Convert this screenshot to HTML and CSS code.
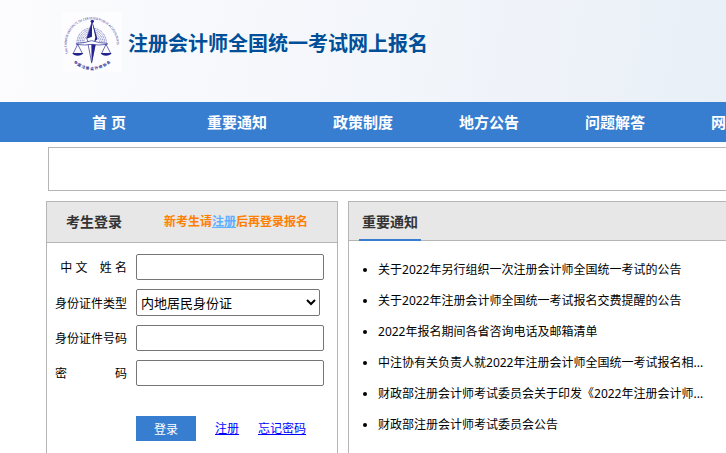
FILE: index.html
```html
<!DOCTYPE html>
<html lang="zh-CN">
<head>
  <meta charset="UTF-8">
  <meta name="viewport" content="width=device-width, initial-scale=1.0">
  <title>注册会计师全国统一考试网上报名</title>
  <link rel="stylesheet" href="styles.css">
</head>
<body>
  <!-- Header -->
  <header class="header">
    <svg class="logo" viewBox="0 0 180 180" aria-hidden="true">
      <defs>
        <path id="ringTop" d="M19 124 A75 75 0 1 1 159 124"/>
        <path id="ringBottom" d="M26 142 A82 82 0 0 0 154 142"/>
      </defs>
      <rect width="180" height="180" fill="#fdfdff"/>
      <!-- Rays -->
      <path d="M45 92 A44 44 0 0 1 133 92 M50 92 A39 39 0 0 1 128 92 M55 92 A34 34 0 0 1 123 92 M60 92 A29 29 0 0 1 118 92 M65 92 A24 24 0 0 1 113 92" fill="none" stroke="#7474bb" stroke-width="3" stroke-dasharray="3 2"/>
      <!-- Compass needle -->
      <path d="M90 30 L105 80 L96 92 H80 L74 80 Z" fill="#fff" stroke="#23238e" stroke-width="2"/>
      <path d="M90 30 L74 80 L90 74 Z" fill="#23238e"/>
      <path d="M91 30 L106 82 L97 88 L100 76 Z" fill="#23238e"/>
      <circle cx="91" cy="28" r="5" fill="#23238e"/>
      <path d="M78 96 H100 L89 152 Z" fill="#fff" stroke="#23238e" stroke-width="2"/>
      <path d="M88 96 H101 L89 156 Z" fill="#23238e"/>
      <!-- Scales -->
      <path d="M43 94 Q66 94 89 86 Q112 94 136 94 L136 97 Q110 101 89 97 Q68 101 43 97 Z" fill="#fff" stroke="#23238e" stroke-width="2"/>
      <path d="M47 97 L34 124 M47 97 L61 124 M132 97 L119 124 M132 97 L146 124" fill="none" stroke="#23238e" stroke-width="2"/>
      <path d="M31 123 H64 Q59 131 47 131 Q35 131 31 123 Z M116 123 H149 Q144 131 132 131 Q120 131 116 123 Z" fill="#23238e"/>
      <text class="logo-text"><textPath href="#ringTop">THE CHINESE INSTITUTE OF CERTIFIED PUBLIC ACCOUNTANTS</textPath></text>
      <text class="logo-text logo-text-cn"><textPath href="#ringBottom" startOffset="50%">中 国 注 册 会 计 师 协 会</textPath></text>
    </svg>
    <h1>注册会计师全国统一考试网上报名</h1>
  </header>

  <!-- Navigation -->
  <nav class="nav">
    <a href="#">首 页&nbsp;</a>
    <a href="#">重要通知</a>
    <a href="#">政策制度</a>
    <a href="#">地方公告</a>
    <a href="#">问题解答</a>
    <a href="#">网上咨询</a>
  </nav>

  <div class="banner"></div>

  <main class="main">
    <!-- Login -->
    <section class="panel login">
      <div class="panel-head">
        <h2>考生登录</h2>
        <p class="tip">新考生请<a href="#">注册</a>后再登录报名</p>
      </div>
      <form class="login-form">
        <div class="form-row">
          <label for="name">中 文 &nbsp;&nbsp; 姓 名</label>
          <input type="text" id="name" name="name">
        </div>
        <div class="form-row">
          <label for="cardType">身份证件类型</label>
          <select id="cardType" name="cardType">
            <option>内地居民身份证</option>
          </select>
        </div>
        <div class="form-row">
          <label for="cardNo">身份证件号码</label>
          <input type="text" id="cardNo" name="cardNo">
        </div>
        <div class="form-row">
          <label for="password">密　　　　码</label>
          <input type="password" id="password" name="password">
        </div>
        <div class="actions">
          <button type="button">登录</button>
          <a href="#">注册</a>
          <a href="#">忘记密码</a>
        </div>
      </form>
    </section>

    <!-- Notices -->
    <section class="panel notices">
      <div class="panel-head">
        <h2>重要通知</h2>
      </div>
      <ul>
        <li>关于2022年另行组织一次注册会计师全国统一考试的公告</li>
        <li>关于2022年注册会计师全国统一考试报名交费提醒的公告</li>
        <li>2022年报名期间各省咨询电话及邮箱清单</li>
        <li>中注协有关负责人就2022年注册会计师全国统一考试报名相...</li>
        <li>财政部注册会计师考试委员会关于印发《2022年注册会计师...</li>
        <li>财政部注册会计师考试委员会公告</li>
      </ul>
    </section>
  </main>
</body>
</html>
```

FILE: styles.css
```css
* {
  margin: 0;
  padding: 0;
  box-sizing: border-box;
}

html {
  overflow: hidden;
}

body {
  min-width: 1000px;
  font-family: "Noto Sans", "Noto Sans CJK SC", sans-serif;
  font-size: 12px;
  line-height: 20px;
  color: #000;
  background-color: #fff;
}

/* Header */
.header {
  display: flex;
  align-items: flex-start;
  gap: 6px;
  height: 102px;
  padding: 12px 0 0 62px;
  background: linear-gradient(100deg, #fcfcfe 0, #f2f5fa 420px, #e8eff7 760px);
}

.logo {
  width: 60px;
  height: 60px;
}

.logo-text {
  font-size: 9px;
  fill: #23238e;
}

.logo-text-cn {
  font-size: 11px;
  font-weight: bold;
  text-anchor: middle;
}

.header h1 {
  font-size: 20px;
  line-height: 64px;
  color: #004f98;
}

/* Navigation */
.nav {
  display: flex;
  height: 40px;
  padding-left: 48px;
  background-color: #377dd0;
}

.nav a {
  flex: 0 0 126px;
  font-size: 15px;
  font-weight: bold;
  line-height: 40px;
  text-align: center;
  color: #fff;
  text-decoration: none;
}

.banner {
  height: 44px;
  margin: 5px 0 10px 48px;
  border: 1px solid #b5b5b5;
}

/* Panels */
.main {
  display: flex;
  gap: 10px;
  padding-left: 46px;
}

.panel {
  border: 1px solid #b5b5b5;
}

.panel-head {
  display: flex;
  align-items: center;
  background-color: #e7e7e7;
  border-bottom: 1px solid #b5b5b5;
}

.panel h2 {
  font-size: 14px;
  color: #333;
}

/* Login */
.login {
  flex: 0 0 292px;
}

.login .panel-head {
  gap: 42px;
  height: 41px;
  padding-left: 19px;
}

.tip {
  font-weight: bold;
  color: #ff8000;
}

.tip a {
  color: #5cb0ff;
}

.login-form {
  padding: 11px 13px 30px 8px;
}

.form-row {
  display: flex;
  align-items: center;
  gap: 9px;
  margin-bottom: 9px;
}

.form-row label {
  flex: 0 0 72px;
  padding-top: 2px;
  text-align: right;
  white-space: nowrap;
}

.form-row input,
.form-row select {
  width: 188px;
  height: 26px;
  border: 1px solid #767676;
  border-radius: 2px;
  font-family: inherit;
  font-size: 13px;
  color: #000;
  background-color: #fff;
}

.form-row select {
  width: 184px;
  height: 27px;
}

.actions {
  display: flex;
  align-items: center;
  gap: 19px;
  padding: 21px 0 0 81px;
}

.actions button {
  width: 60px;
  height: 25px;
  border: none;
  font-family: inherit;
  font-size: 12px;
  color: #fff;
  background-color: #377dd0;
  cursor: pointer;
}

.actions a {
  color: #00f;
}

/* Notices */
.notices {
  flex: 1;
}

.notices .panel-head {
  height: 39px;
  padding-left: 10px;
}

.notices h2 {
  height: 39px;
  padding: 0 3px;
  line-height: 39px;
  border-bottom: 2px solid #377dd0;
}

.notices ul {
  padding: 13px 0 13px 29px;
}

.notices li {
  line-height: 31px;
}
```
